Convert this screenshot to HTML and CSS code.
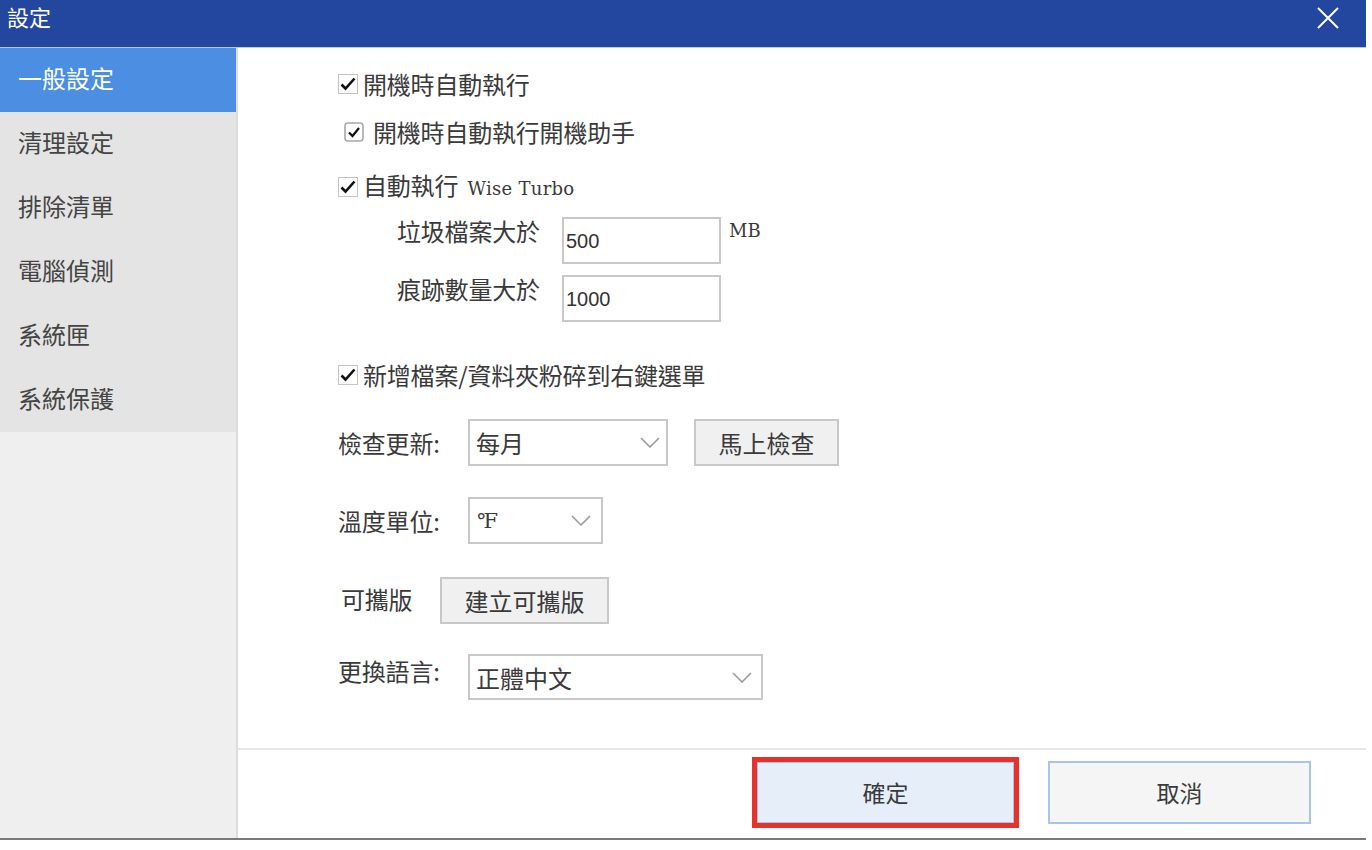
FILE: index.html
```html
<!DOCTYPE html>
<html lang="zh-Hant">

<head>
     <meta charset="UTF-8">
     <title>設定</title>
     <link rel="stylesheet" href="styles.css">
</head>

<body>
     <div class="window">
          <div class="titlebar">
               <span class="title">設定</span>
               <svg class="close" width="22" height="22" viewBox="0 0 22 22">
                    <path d="M1 1L21 21M21 1L1 21" stroke="#fff" stroke-width="2" fill="none" />
               </svg>
          </div>

          <div class="main">
               <ul class="sidebar">
                    <li class="active">一般設定</li>
                    <li>清理設定</li>
                    <li>排除清單</li>
                    <li>電腦偵測</li>
                    <li>系統匣</li>
                    <li>系統保護</li>
               </ul>

               <div class="content">
                    <div class="form">
                         <label class="check row1">
                              <svg class="box" width="20" height="20" viewBox="0 0 20 20">
                                   <rect x="0.5" y="0.5" width="19" height="19" fill="#fff" stroke="#c4c4c4" />
                                   <path d="M3.5 10.5L7.5 14.5L16.5 4.5" stroke="#111" stroke-width="2.6" fill="none" />
                              </svg>
                              <span>開機時自動執行</span>
                         </label>

                         <label class="check check-round row2">
                              <svg class="box" width="20" height="20" viewBox="0 0 20 20">
                                   <rect x="1" y="1" width="18" height="18" rx="3" fill="#fff" stroke="#a8a8a8" stroke-width="1.6" />
                                   <path d="M5 10.5L8.5 14L15 6" stroke="#111" stroke-width="2.2" fill="none" />
                              </svg>
                              <span>開機時自動執行開機助手</span>
                         </label>

                         <label class="check row3">
                              <svg class="box" width="20" height="20" viewBox="0 0 20 20">
                                   <rect x="0.5" y="0.5" width="19" height="19" fill="#fff" stroke="#c4c4c4" />
                                   <path d="M3.5 10.5L7.5 14.5L16.5 4.5" stroke="#111" stroke-width="2.6" fill="none" />
                              </svg>
                              <span>自動執行 <em class="latin">Wise Turbo</em></span>
                         </label>

                         <div class="sub sub1">
                              <span class="sub-label">垃圾檔案大於</span>
                              <div class="input">500</div>
                              <span class="unit">MB</span>
                         </div>

                         <div class="sub sub2">
                              <span class="sub-label">痕跡數量大於</span>
                              <div class="input">1000</div>
                         </div>

                         <label class="check row4">
                              <svg class="box" width="20" height="20" viewBox="0 0 20 20">
                                   <rect x="0.5" y="0.5" width="19" height="19" fill="#fff" stroke="#c4c4c4" />
                                   <path d="M3.5 10.5L7.5 14.5L16.5 4.5" stroke="#111" stroke-width="2.6" fill="none" />
                              </svg>
                              <span>新增檔案/資料夾粉碎到右鍵選單</span>
                         </label>

                         <div class="field update">
                              <span class="field-label">檢查更新:</span>
                              <div class="select sel-update">
                                   <span>每月</span>
                                   <svg class="chevron" width="20" height="11" viewBox="0 0 20 11">
                                        <path d="M1 1L10 10L19 1" stroke="#9a9a9a" stroke-width="1.6" fill="none" />
                                   </svg>
                              </div>
                              <button class="btn btn-check">馬上檢查</button>
                         </div>

                         <div class="field temp">
                              <span class="field-label">溫度單位:</span>
                              <div class="select sel-temp">
                                   <span class="deg">°F</span>
                                   <svg class="chevron" width="20" height="11" viewBox="0 0 20 11">
                                        <path d="M1 1L10 10L19 1" stroke="#9a9a9a" stroke-width="1.6" fill="none" />
                                   </svg>
                              </div>
                         </div>

                         <div class="field portable">
                              <span class="field-label portable-label">可攜版</span>
                              <button class="btn btn-portable">建立可攜版</button>
                         </div>

                         <div class="field lang">
                              <span class="field-label lang-label">更換語言:</span>
                              <div class="select sel-lang">
                                   <span>正體中文</span>
                                   <svg class="chevron" width="20" height="11" viewBox="0 0 20 11">
                                        <path d="M1 1L10 10L19 1" stroke="#9a9a9a" stroke-width="1.6" fill="none" />
                                   </svg>
                              </div>
                         </div>
                    </div>

                    <div class="footer">
                         <button class="btn-ok">確定</button>
                         <button class="btn-cancel">取消</button>
                    </div>
               </div>
          </div>
     </div>
</body>
</html>
```

FILE: styles.css
```css
* {
     margin: 0;
     padding: 0;
     box-sizing: border-box;
}

body {
     background: #fff;
     font-family: "Noto Sans CJK TC", "Noto Sans", sans-serif;
     color: #3a3a3a;
}

.window {
     width: 1366px;
     height: 840px;
     display: flex;
     flex-direction: column;
     border-bottom: 2px solid #7a7a7a;
}

.titlebar {
     height: 48px;
     background: #23479f;
     border-bottom: 1px solid #b8c8e8;
     display: flex;
     justify-content: space-between;
     align-items: flex-start;
     padding: 3px 27px 0 7px;
}

.title {
     color: #fff;
     font-size: 22px;
     line-height: 26px;
}

.close {
     margin-top: 4px;
}

.main {
     flex: 1;
     display: flex;
}

.sidebar {
     list-style: none;
     width: 238px;
     background: #efefef;
     border-right: 2px solid #dcdcdc;
}

.sidebar li {
     height: 64px;
     line-height: 60px;
     padding-left: 18px;
     font-size: 24px;
     color: #444;
     background: #e4e4e4;
}

.sidebar li.active {
     background: #4b8ee2;
     color: #fff;
}

.content {
     flex: 1;
     display: flex;
     flex-direction: column;
}

.form {
     flex: 1;
     padding: 24px 0 0 100px;
     display: flex;
     flex-direction: column;
     align-items: flex-start;
}

.check {
     display: flex;
     align-items: center;
     height: 24px;
     font-size: 24px;
     line-height: 24px;
     letter-spacing: -0.2px;
}

.check .box {
     margin-right: 5px;
     flex-shrink: 0;
}

.check-round {
     margin-left: 6px;
}

.check-round .box {
     margin-right: 9px;
}

.latin {
     font-style: normal;
     font-family: "DejaVu Serif", "Liberation Serif", serif;
     font-size: 18px;
     letter-spacing: 0.3px;
     margin-left: 4px;
}

.row2 {
     margin-top: 24px;
}

.row3 {
     margin-top: 31px;
}

.sub {
     display: flex;
     align-items: flex-start;
     margin-left: 59px;
}

.sub1 {
     margin-top: 18px;
}

.sub2 {
     margin-top: 11px;
}

.sub-label {
     width: 165px;
     font-size: 24px;
     line-height: 28px;
     letter-spacing: -0.2px;
}

.input {
     width: 159px;
     height: 47px;
     border: 2px solid #c8c8c8;
     font-family: "Liberation Sans", "DejaVu Sans", sans-serif;
     font-size: 20px;
     line-height: 45px;
     padding-left: 2px;
     color: #333;
}

.unit {
     font-family: "DejaVu Serif", "Liberation Serif", serif;
     font-size: 18px;
     line-height: 28px;
     margin-left: 8px;
}

.row4 {
     margin-top: 41px;
}

.field {
     display: flex;
     align-items: center;
}

.field-label {
     width: 130px;
     font-size: 24px;
     line-height: 28px;
     letter-spacing: -0.2px;
}

.update {
     margin-top: 32px;
}

.temp {
     margin-top: 31px;
}

.portable {
     margin-top: 33px;
}

.lang {
     margin-top: 30px;
}

.portable-label {
     width: 102px;
     padding-left: 3px;
     margin-top: -4px;
}

.lang-label {
     align-self: flex-start;
     margin-top: 3px;
}

.select {
     height: 47px;
     border: 2px solid #c8c8c8;
     background: #fff;
     display: flex;
     align-items: center;
     justify-content: space-between;
     padding: 0 6px 0 6px;
     font-size: 24px;
}

.sel-update {
     width: 200px;
}

.sel-temp {
     width: 135px;
     padding-right: 10px;
}

.sel-lang {
     width: 295px;
     height: 46px;
     padding-right: 9px;
}

.deg {
     font-family: "DejaVu Serif", "Liberation Serif", serif;
     font-size: 21px;
     letter-spacing: -3px;
}

.btn {
     height: 47px;
     border: 2px solid #c8c8c8;
     background: #f0f0f0;
     font-family: "Noto Sans CJK TC", sans-serif;
     font-size: 24px;
     color: #3a3a3a;
}

.btn-check {
     width: 145px;
     margin-left: 26px;
}

.btn-portable {
     width: 169px;
}

.footer {
     height: 90px;
     border-top: 2px solid #e6e6e6;
     display: flex;
     align-items: center;
     justify-content: flex-end;
     padding: 0 55px 4px 0;
     gap: 29px;
}

.btn-ok,
.btn-cancel {
     font-family: "Noto Sans CJK TC", sans-serif;
     font-size: 23px;
     color: #3a3a3a;
}

.btn-ok {
     width: 267px;
     height: 71px;
     background: #e6eefa;
     border: 5px solid #e6322a;
     box-shadow: inset 0 0 0 1px #a9c4ea;
}

.btn-cancel {
     width: 263px;
     height: 63px;
     background: #f5f5f5;
     border: 2px solid #a9c4ea;
}
```
